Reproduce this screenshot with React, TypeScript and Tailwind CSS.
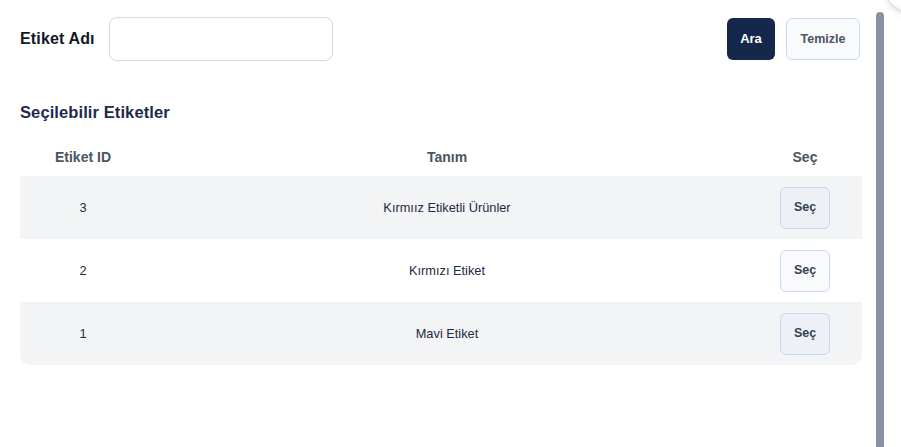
const rows = [
  { id: 3, name: "Kırmıız Etiketli Ürünler" },
  { id: 2, name: "Kırmızı Etiket" },
  { id: 1, name: "Mavi Etiket" },
];

const App = () => {
  return (
    <div className="relative flex h-[447px] w-[901px] overflow-hidden bg-white font-['Liberation_Sans',Arial,sans-serif]">
      <div className="w-[862px] pl-[20px] pt-[17px]">
        <div className="flex items-center justify-between pr-[2px]">
          <div className="flex items-center gap-[14px]">
            <label className="text-[16px] tracking-[0.15px] font-bold text-[#111827]">Etiket Adı</label>
            <input
              type="text"
              className="h-[44px] w-[224px] rounded-[8px] border border-[#d5d9e0] bg-white px-3 text-[13px] outline-none"
            />
          </div>
          <div className="flex items-center gap-[11px]">
            <button className="h-[42px] w-[48px] rounded-[6px] bg-[#15284b] text-[13px] font-bold text-white">
              Ara
            </button>
            <button className="h-[42px] w-[74px] rounded-[6px] border border-[#c9d7f7] bg-[#f8fafc] text-[12.5px] font-bold text-[#4b5563]">
              Temizle
            </button>
          </div>
        </div>

        <h3 className="mt-[41px] text-[16.5px] tracking-[0.1px] leading-[20px] font-bold text-[#1e2b4d]">
          Seçilebilir Etiketler
        </h3>

        <div className="mt-[20px]">
          <div className="grid h-[30px] grid-cols-[126px_1fr_114px] items-center text-center text-[14px] font-semibold text-[#4b5563]">
            <div>Etiket ID</div>
            <div>Tanım</div>
            <div>Seç</div>
          </div>
          <div className="mt-[4px] overflow-hidden rounded-b-[10px]">
            {rows.map((r, i) => (
              <div
                key={r.id}
                className={
                  "grid h-[63px] grid-cols-[126px_1fr_114px] items-center text-center text-[12.8px] text-[#1f2a44] " +
                  (i % 2 === 0 ? "bg-[#f3f4f6]" : "bg-white")
                }
              >
                <div>{r.id}</div>
                <div>{r.name}</div>
                <div className="flex justify-center">
                  <button
                    className={
                      "h-[42px] w-[50px] rounded-[6px] border border-[#c9d7f7] text-[12.5px] font-bold text-[#374151] " +
                      (i % 2 === 0 ? "bg-[#edf1f6]" : "bg-[#f8fafc]")
                    }
                  >
                    Seç
                  </button>
                </div>
              </div>
            ))}
          </div>
        </div>
      </div>

      <div className="ml-[14px] mt-[12px] w-[8px] rounded-t-full bg-[#8b91a5]" />

      <div className="absolute left-[884px] top-[-40px] h-[52px] w-[52px] rounded-full border border-[#e5e7eb] bg-white shadow-md" />
    </div>
  );
};

export default App;
